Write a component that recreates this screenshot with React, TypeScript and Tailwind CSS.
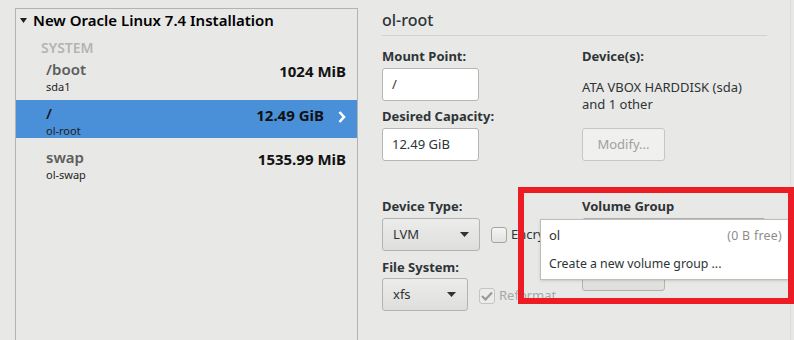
import React from "react";

const rows = [
  { name: "/boot", dev: "sda1", size: "1024 MiB", selected: false },
  { name: "/", dev: "ol-root", size: "12.49 GiB", selected: true },
  { name: "swap", dev: "ol-swap", size: "1535.99 MiB", selected: false },
];

const Caret = () => (
  <svg width="9" height="5" viewBox="0 0 9 5">
    <path d="M0 0 L9 0 L4.5 5 Z" fill="#2e3436" />
  </svg>
);

const App = () => {
  return (
    <div
      className="relative flex w-[794px] h-[340px] overflow-hidden bg-[#e8e8e7] text-[#2e3436]"
      style={{ fontFamily: '"Noto Sans", "DejaVu Sans", sans-serif' }}
    >
      {/* Mount point list */}
      <div className="ml-[15px] mt-[8px] w-[343px] h-[340px] shrink-0 border border-b-0 border-[#b3b3b0]">
        <div className="flex items-center h-[20px] mt-[1px] pl-[4px] gap-[6px] text-[15px] leading-[20px] font-semibold text-black">
          <svg width="7" height="5" viewBox="0 0 7 5">
            <path d="M0 0 L7 0 L3.5 5 Z" fill="#1e1e1e" />
          </svg>
          <span>New Oracle Linux 7.4 Installation</span>
        </div>
        <div className="mt-[9px] pl-[25px] text-[14px] leading-[17px] font-semibold text-[#b4b4b2]">
          SYSTEM
        </div>
        <div className="flex flex-col gap-[6px]">
          {rows.map((r) => (
            <div
              key={r.dev}
              className={`flex justify-between h-[38px] pl-[30px] pr-[11px] ${
                r.selected ? "bg-[#4a90d9]" : ""
              }`}
            >
              <div className="pt-[3px]">
                <div
                  className={`text-[15px] leading-[20px] font-semibold ${
                    r.selected ? "text-[#1a1a1a]" : "text-[#5d5d5c]"
                  }`}
                >
                  {r.name}
                </div>
                <div className="mt-[1px] text-[11px] leading-[14px] text-[#1e1e1e]">
                  {r.dev}
                </div>
              </div>
              <div className="flex items-start gap-[14px] mt-[5px]">
                <span className="text-[15px] leading-[20px] font-bold text-[#111]">
                  {r.size}
                </span>
                {r.selected && (
                  <svg width="8" height="12" viewBox="0 0 8 12" className="mt-[6px]">
                    <path
                      d="M1.5 1 L6 6 L1.5 11"
                      fill="none"
                      stroke="#fff"
                      strokeWidth="2.6"
                    />
                  </svg>
                )}
              </div>
            </div>
          ))}
        </div>
      </div>

      {/* Details */}
      <div className="ml-[24px] w-[409px] border-r border-[#dcdcda] flex flex-col">
        <div className="mt-[10px] text-[16px] leading-[20px] font-medium text-[#2e3436]">
          ol-root
        </div>
        <div className="mt-[5px] w-[385px] h-px bg-[#d1d1cf]" />

        <div className="flex">
          {/* left column */}
          <div className="w-[200px] flex flex-col">
            <div className="mt-[12px] text-[13px] leading-[17px] font-bold">Mount Point:</div>
            <div className="mt-[3px] w-[97px] h-[33px] rounded-[3px] border border-[#b6b6b3] bg-white pl-[9px] flex items-center text-[13px]">
              /
            </div>
            <div className="mt-[7px] text-[13px] leading-[17px] font-bold">Desired Capacity:</div>
            <div className="mt-[3px] w-[97px] h-[33px] rounded-[3px] border border-[#b6b6b3] bg-white pl-[9px] flex items-center text-[13px]">
              12.49 GiB
            </div>

            <div className="mt-[37px] text-[13px] leading-[17px] font-bold">Device Type:</div>
            <div className="mt-[3px] flex items-center">
              <div className="w-[98px] h-[33px] rounded-[3px] border border-[#b3b3b0] bg-gradient-to-b from-[#ececeb] to-[#dededc] pl-[10px] pr-[10px] flex items-center justify-between text-[13px]">
                <span>LVM</span>
                <Caret />
              </div>
              <div className="ml-[11px] w-[16px] h-[16px] rounded-[3px] border border-[#a5a5a2] bg-gradient-to-b from-[#f4f4f3] to-[#e2e2e0]" />
              <span className="ml-[4px] whitespace-nowrap text-[13px] text-[#2e3436]">Encrypt</span>
            </div>
            <div className="mt-[8px] text-[13px] leading-[17px] font-bold">File System:</div>
            <div className="mt-[2px] flex items-center">
              <div className="w-[86px] h-[33px] rounded-[3px] border border-[#b3b3b0] bg-gradient-to-b from-[#ececeb] to-[#dededc] pl-[10px] pr-[11px] flex items-center justify-between text-[13px]">
                <span>xfs</span>
                <Caret />
              </div>
              <div className="ml-[11px] mt-[2px] w-[16px] h-[16px] rounded-[3px] border border-[#c4c4c1] bg-[#ececeb] flex items-center justify-center">
                <svg width="12" height="10" viewBox="0 0 12 10">
                  <path d="M1 5 L4.5 8.5 L11 1.5" fill="none" stroke="#9a9a98" strokeWidth="2.2" />
                </svg>
              </div>
              <span className="ml-[4px] mt-[2px] text-[13px] text-[#a8a8a6]">Reformat</span>
            </div>
          </div>

          {/* right column */}
          <div className="flex flex-col">
            <div className="mt-[12px] text-[13px] leading-[17px] font-bold">Device(s):</div>
            <div className="mt-[14px] text-[13px] leading-[17px]">
              ATA VBOX HARDDISK (sda)
              <br />
              and 1 other
            </div>
            <div className="mt-[15px] w-[83px] h-[33px] rounded-[3px] border border-[#c6c6c3] bg-[#f0f0ef] flex items-center justify-center text-[13px] text-[#a0a09e]">
              Modify...
            </div>

            <div className="mt-[37px] text-[13px] leading-[17px] font-bold">Volume Group</div>
            <div className="mt-[3px] w-[184px] h-[33px] rounded-[3px] border border-[#b3b3b0] bg-gradient-to-b from-[#ececeb] to-[#dededc]" />
            <div className="mt-[7px] w-[83px] h-[33px] rounded-[3px] border border-[#b3b3b0] bg-gradient-to-b from-[#ececeb] to-[#dededc]" />
          </div>
        </div>
      </div>

      {/* Volume group popup */}
      <div className="absolute left-[540px] top-[219px] w-[251px] h-[61px] bg-white border border-[#bdbdbb] shadow-sm text-[12.3px] text-[#2e3436]">
        <div className="flex justify-between pl-[8px] pr-[8px] pt-[7px] leading-[17px]">
          <span className="text-[13px]">ol</span>
          <span className="text-[#8d8d8b] tracking-[0.3px]">(0 B free)</span>
        </div>
        <div className="pl-[8px] mt-[11px] leading-[17px]">Create a new volume group ...</div>
      </div>

      {/* Annotation */}
      <div className="absolute left-[518px] top-[187px] w-[276px] h-[117px] border-[6px] border-[#ed1c24]" />
    </div>
  );
};

export default App;
